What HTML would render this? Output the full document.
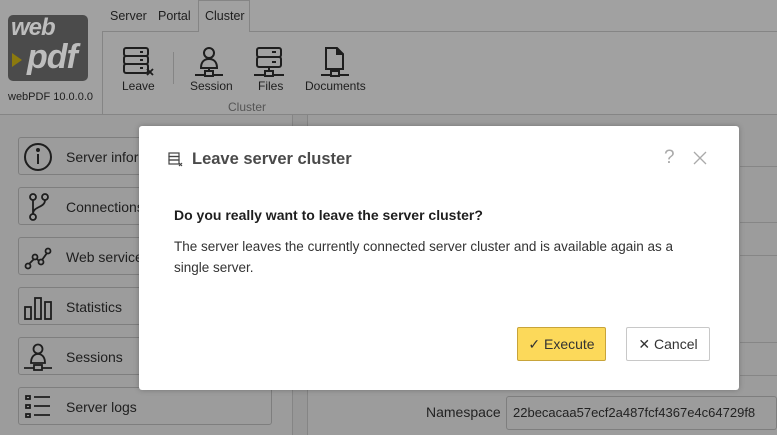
<!DOCTYPE html>
<html><head><meta charset="utf-8"><style>
*{margin:0;padding:0;box-sizing:border-box}
body{width:777px;height:435px;overflow:hidden;background:#9c9c9c;font-family:"Liberation Sans",sans-serif;position:relative;color:#1e1e1e}
.abs{position:absolute}
.rib{left:0;top:0;width:777px;height:115px;background:#a1a1a1;border-bottom:1px solid #858585}
.tab{top:6px;font-size:12.5px;color:#1e1e1e}
.lbl{font-size:12px;color:#1e1e1e;top:79px;text-align:center}
.sb{left:18px;width:254px;height:38px;border:1px solid #7e7e7e;border-radius:3px;background:#9c9c9c}
.sb span{position:absolute;left:47px;top:11px;font-size:14px;color:#1e1e1e}
.sb svg{position:absolute;left:4px;top:4px}
.hl{height:1px;background:#868686;left:740px;width:37px}
.dlg{left:139px;top:126px;width:600px;height:264px;background:#fff;border-radius:3px;box-shadow:0 0 6px rgba(0,0,0,.25)}
.btn{top:201px;height:34px;border-radius:2px;font-size:14px;text-align:center;line-height:32px}
</style></head><body>
<div class="abs rib"></div>
<!-- logo -->
<div class="abs" style="left:8px;top:15px;width:80px;height:66px;background:#4b4b4b;border-radius:5px"></div>
<div class="abs" style="left:11px;top:14px;font:italic bold 24px 'Liberation Sans',sans-serif;color:#bdbdbd;letter-spacing:-1px">web</div>
<div class="abs" style="left:27px;top:38px;font:italic bold 34px 'Liberation Sans',sans-serif;color:#bdbdbd;letter-spacing:-1px">pdf</div>
<div class="abs" style="left:12px;top:53px;width:0;height:0;border-left:10px solid #8c7a0e;border-top:7px solid transparent;border-bottom:7px solid transparent"></div>
<div class="abs" style="left:8px;top:91px;font-size:11px">webPDF 10.0.0.0</div>
<div class="abs" style="left:102px;top:31px;width:675px;height:1px;background:#858585"></div>
<div class="abs" style="left:102px;top:31px;width:1px;height:84px;background:#858585"></div>
<div class="abs" style="left:198px;top:0;width:52px;height:32px;background:#a1a1a1;border:1px solid #858585;border-bottom:none"></div>
<div class="abs tab" style="left:110px;top:9px">Server</div>
<div class="abs tab" style="left:158px;top:9px">Portal</div>
<div class="abs tab" style="left:205px;top:9px">Cluster</div>
<!-- ribbon icons -->
<svg class="abs" style="left:120px;top:44px" width="36" height="34" fill="none" stroke="#1e1e1e" stroke-width="2"><rect x="4" y="4" width="24" height="8" rx="2"/><rect x="4" y="12" width="24" height="8" rx="2"/><rect x="4" y="20" width="24" height="9" rx="2"/><path d="M20 8h3M20 16h3M20 24h3"/><path d="M27 25l6 6M33 25l-6 6" stroke-width="1.8"/></svg>
<div class="abs" style="left:173px;top:52px;width:1px;height:32px;background:#858585"></div>
<svg class="abs" style="left:192px;top:44px" width="36" height="34" fill="none" stroke="#1e1e1e" stroke-width="2"><circle cx="17" cy="9" r="5"/><path d="M9 24c0-6 3-9 8-9s8 3 8 9z"/><path d="M3 31h28M17 24v3"/><rect x="13" y="27" width="8" height="5" fill="#a1a1a1"/></svg>
<svg class="abs" style="left:252px;top:44px" width="36" height="34" fill="none" stroke="#1e1e1e" stroke-width="2"><rect x="5" y="4" width="24" height="9" rx="2"/><rect x="5" y="13" width="24" height="10" rx="2"/><path d="M20 8h4M20 18h4M17 23v4M2 31h30"/><rect x="13" y="27" width="8" height="5" fill="#a1a1a1"/></svg>
<svg class="abs" style="left:318px;top:44px" width="36" height="34" fill="none" stroke="#1e1e1e" stroke-width="2"><path d="M8 4h11l6 6v15H8z"/><path d="M19 4v6h6" fill="#1e1e1e"/><path d="M17 25v2M3 31h28"/><rect x="13" y="27" width="8" height="5" fill="#a1a1a1"/></svg>
<div class="abs lbl" style="left:122px">Leave</div>
<div class="abs lbl" style="left:190px">Session</div>
<div class="abs lbl" style="left:258px">Files</div>
<div class="abs lbl" style="left:305px">Documents</div>
<div class="abs" style="left:228px;top:100px;font-size:12px;color:#555">Cluster</div>
<!-- content separators -->
<div class="abs" style="left:292px;top:115px;width:1px;height:320px;background:#858585"></div>
<div class="abs" style="left:293px;top:115px;width:14px;height:320px;background:#979797"></div>
<div class="abs" style="left:307px;top:115px;width:1px;height:320px;background:#858585"></div>
<div class="abs hl" style="top:166px"></div>
<div class="abs hl" style="top:222px"></div>
<div class="abs hl" style="top:255px"></div>
<div class="abs hl" style="top:342px"></div>
<div class="abs hl" style="top:375px"></div>
<!-- sidebar -->
<div class="abs sb" style="top:137px"><svg width="30" height="30" fill="none" stroke="#1e1e1e" stroke-width="2"><circle cx="15" cy="15" r="13"/><path d="M15 12v10"/><circle cx="15" cy="8" r="1" fill="#1e1e1e"/></svg><span>Server information</span></div>
<div class="abs sb" style="top:187px"><svg width="30" height="30" fill="none" stroke="#1e1e1e" stroke-width="1.8"><circle cx="10" cy="5" r="3"/><circle cx="10" cy="25" r="3"/><circle cx="22" cy="5" r="3"/><path d="M10 8v14M22 8c0 8-12 6-12 14"/></svg><span>Connections</span></div>
<div class="abs sb" style="top:237px"><svg width="30" height="30" fill="none" stroke="#1e1e1e" stroke-width="1.8"><circle cx="5" cy="24" r="2.5"/><circle cx="12" cy="15" r="2.5"/><circle cx="18" cy="20" r="2.5"/><circle cx="25" cy="9" r="2.5"/><path d="M6 22l5-5M14 17l2 2M19 18l5-7"/></svg><span>Web services</span></div>
<div class="abs sb" style="top:287px"><svg width="30" height="30" fill="none" stroke="#1e1e1e" stroke-width="1.8"><rect x="2" y="15" width="6" height="12"/><rect x="12" y="6" width="6" height="21"/><rect x="22" y="10" width="6" height="17"/></svg><span>Statistics</span></div>
<div class="abs sb" style="top:337px"><svg width="30" height="30" fill="none" stroke="#1e1e1e" stroke-width="1.8"><circle cx="15" cy="7" r="4.5"/><path d="M8 21c0-6 3-9 7-9s7 3 7 9z"/><path d="M1 26h28"/><rect x="11" y="23" width="8" height="5" fill="#9c9c9c"/></svg><span>Sessions</span></div>
<div class="abs sb" style="top:387px"><svg width="30" height="30" fill="none" stroke="#1e1e1e" stroke-width="1.8"><rect x="3" y="4" width="4" height="3"/><rect x="3" y="13" width="4" height="3"/><rect x="3" y="22" width="4" height="3"/><path d="M11 5h16M11 14h16M11 23h16"/></svg><span>Server logs</span></div>
<!-- namespace -->
<div class="abs" style="left:426px;top:404px;font-size:14px;color:#222">Namespace</div>
<div class="abs" style="left:506px;top:396px;width:271px;height:34px;border:1px solid #7e7e7e;border-radius:3px;font-size:13px;padding:8px 0 0 6px;color:#222;white-space:nowrap;overflow:hidden">22becacaa57ecf2a487fcf4367e4c64729f8</div>
<!-- dialog -->
<div class="abs dlg">
 <svg class="abs" style="left:29px;top:26px" width="16" height="15" fill="none" stroke="#444" stroke-width="1.2"><rect x="1" y="1" width="10" height="3.5"/><rect x="1" y="4.5" width="10" height="3.5"/><rect x="1" y="8" width="10" height="4"/><path d="M11 11l3 3M14 11l-3 3"/></svg>
 <div class="abs" style="left:53px;top:24px;font-size:16.5px;font-weight:bold;color:#4a4a4a">Leave server cluster</div>
 <div class="abs" style="left:525px;top:21px;font-size:19px;color:#aaa">?</div>
 <svg class="abs" style="left:554px;top:25px" width="14" height="14" stroke="#aaa" stroke-width="1.3"><path d="M1 1l12 12M13 1L1 13"/></svg>
 <div class="abs" style="left:35px;top:81px;font-size:14px;font-weight:bold;color:#1e1e1e">Do you really want to leave the server cluster?</div>
 <div class="abs" style="left:35px;top:110px;width:510px;font-size:13.5px;line-height:21px;color:#333">The server leaves the currently connected server cluster and is available again as a single server.</div>
 <div class="abs btn" style="left:378px;width:89px;background:#fcd95a;border:1px solid #c8a43a;color:#333">✓ Execute</div>
 <div class="abs btn" style="left:487px;width:84px;background:#fff;border:1px solid #c8c8c8;color:#333">✕ Cancel</div>
</div>
</body></html>
